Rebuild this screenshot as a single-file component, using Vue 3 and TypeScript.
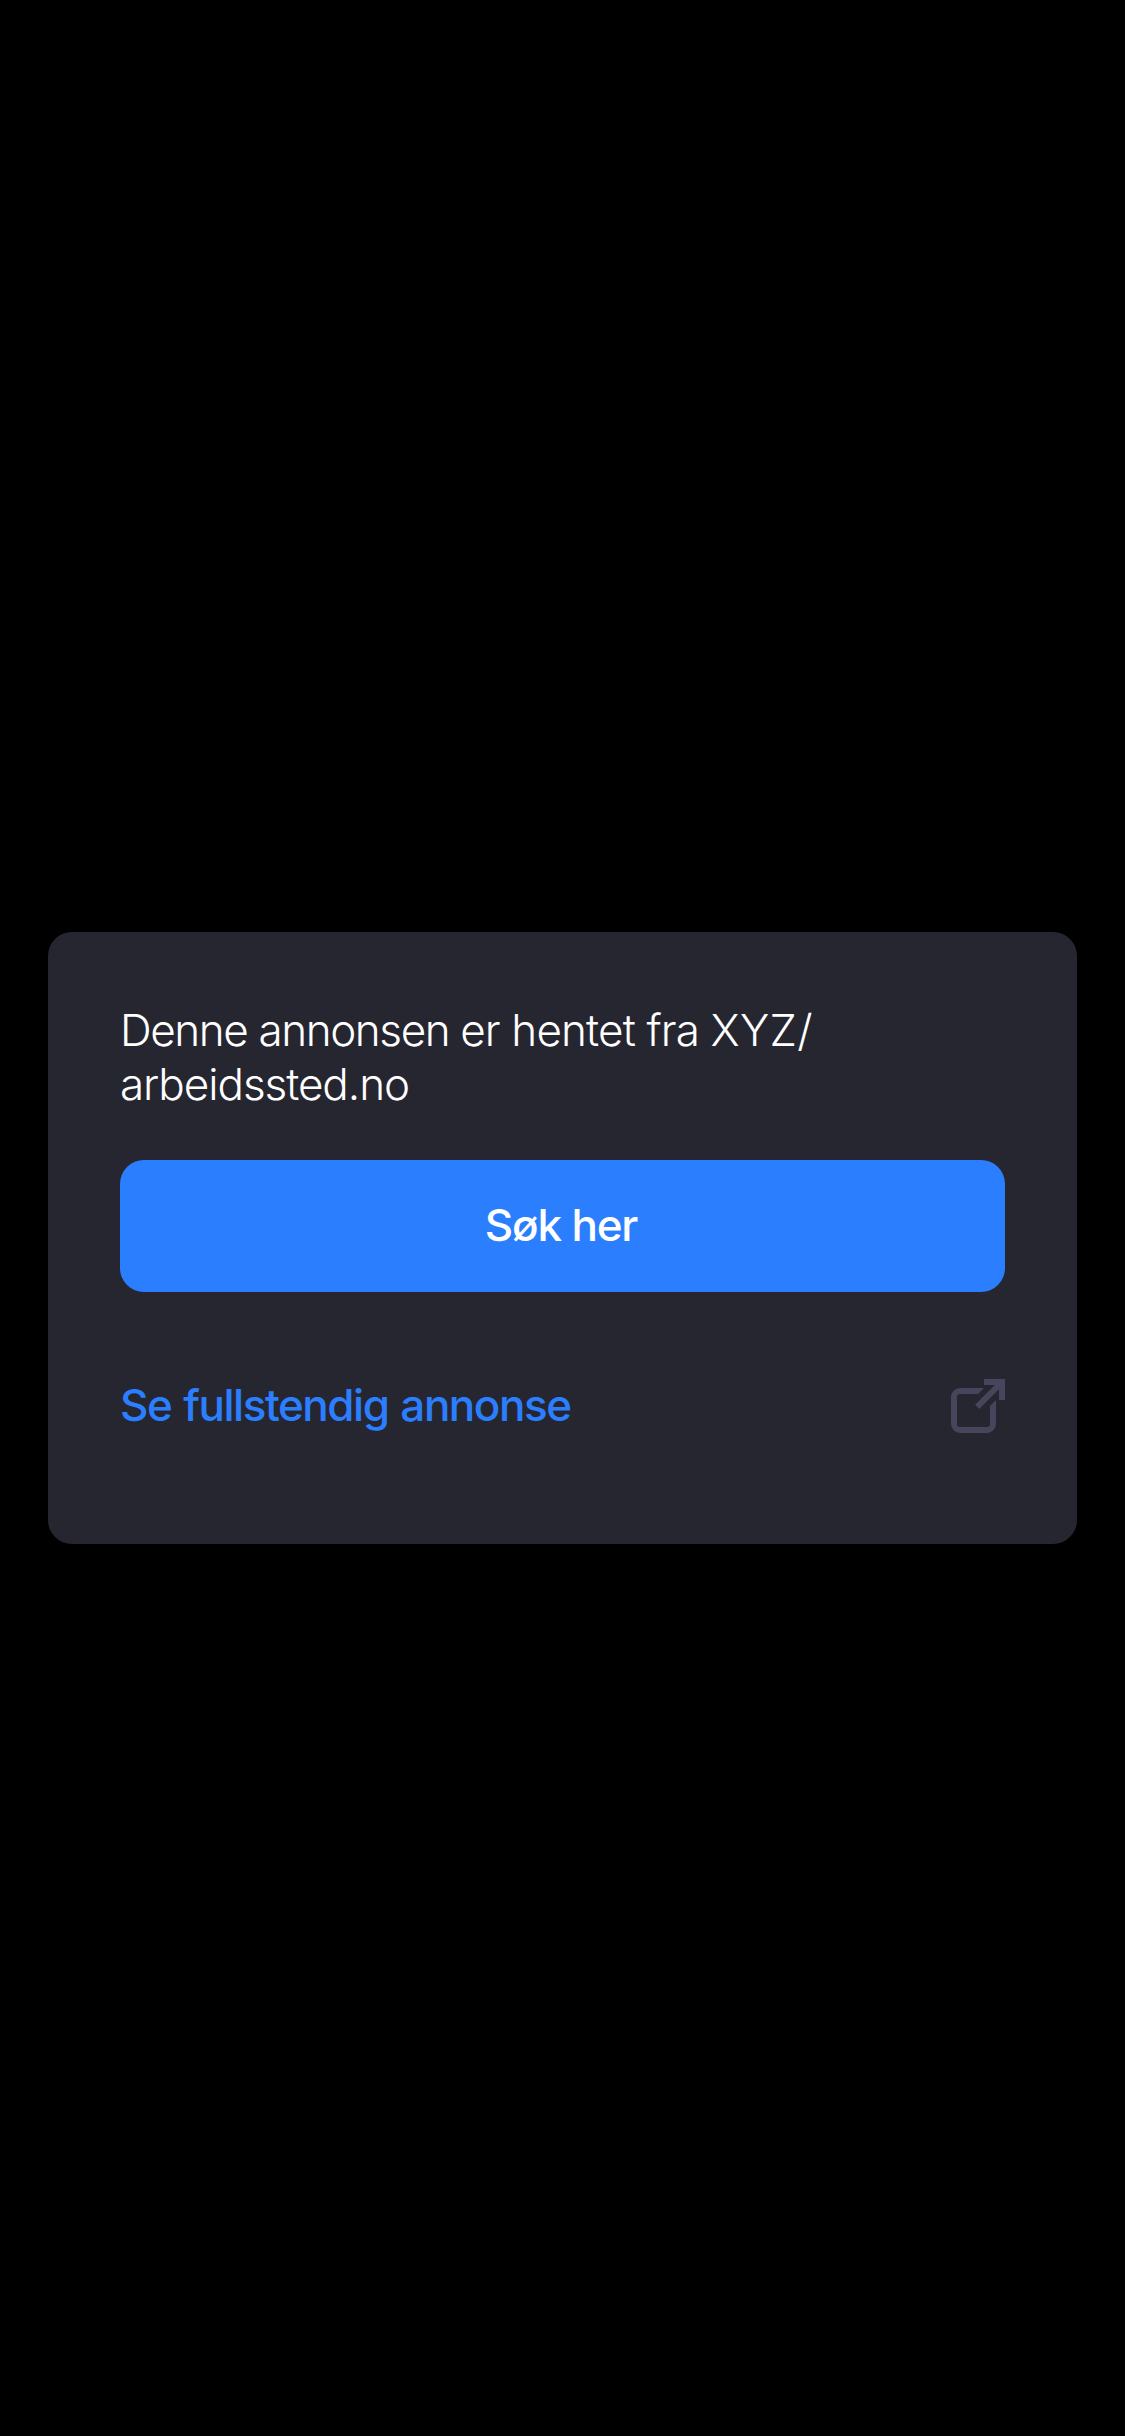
<script setup lang="ts">
interface Run {
  text: string
  tone: string
}

const sourceLines: Run[][] = [
  [
    { text: 'Denne annonsen ', tone: 'tight' },
    { text: 'er hentet fra ', tone: 'regular' },
    { text: 'XYZ/', tone: 'wide' },
  ],
  [{ text: 'arbeidssted.no', tone: 'base' }],
]
const applyLabel = 'Søk her'
const linkLabel = 'Se fullstendig annonse'
</script>

<template>
  <main class="screen">
    <section class="card">
      <p class="source">
        <span v-for="(line, i) in sourceLines" :key="i" class="line"
          ><span v-for="run in line" :key="run.text" :class="run.tone">{{ run.text }}</span></span
        >
      </p>
      <button class="apply" type="button"><span>{{ applyLabel }}</span></button>
      <a class="link">
        <span class="link-text">{{ linkLabel }}</span>
        <svg class="icon" width="54" height="54" viewBox="0 0 54 54" fill="none" aria-hidden="true">
          <path
            d="M33 9H9A9 9 0 0 0 0 18V45A9 9 0 0 0 9 54H36A9 9 0 0 0 45 45V21L39 27V45A3 3 0 0 1 36 48H9A3 3 0 0 1 6 45V18A3 3 0 0 1 9 15H27Z"
            fill="#46455c"
          />
          <path d="M33 3H51V21M51 3L26.2 27.8" stroke="#46455c" stroke-width="6" />
        </svg>
      </a>
    </section>
  </main>
</template>

<style>
body {
  background: #000;
}
</style>

<style scoped>
.screen {
  box-sizing: border-box;
  height: 2436px;
  padding: 932px 48px 0;
  background: #000;
  font-family: Inter, "Liberation Sans", sans-serif;
}

.card {
  box-sizing: border-box;
  height: 612px;
  padding: 71px 72px 72px;
  border-radius: 24px;
  background: #262631;
}

.source {
  margin: 0 0 49px;
  color: #fff;
  font-size: 44px;
  font-weight: 300;
  line-height: 54px;
}

.line {
  display: block;
  white-space: pre;
}

.tight {
  letter-spacing: -1.4px;
}

.regular {
  letter-spacing: -0.85px;
}

.wide {
  letter-spacing: 0.3px;
}

.base {
  letter-spacing: -1.05px;
}

.apply {
  box-sizing: border-box;
  display: flex;
  align-items: center;
  justify-content: center;
  width: 100%;
  height: 132px;
  padding: 0 3px 2px 0;
  border: 0;
  border-radius: 24px;
  background: #2b7fff;
  color: #fff;
  font: 500 44px/54px Inter, "Liberation Sans", sans-serif;
  letter-spacing: -1.2px;
}

.link {
  display: flex;
  align-items: center;
  justify-content: space-between;
  height: 54px;
  margin-top: 87px;
  color: #2b7fff;
  font-size: 44px;
  font-weight: 500;
  line-height: 54px;
  letter-spacing: -1.48px;
  word-spacing: 1.7px;
  white-space: nowrap;
}

.link-text {
  padding-bottom: 2px;
}

.icon {
  display: block;
}
</style>
